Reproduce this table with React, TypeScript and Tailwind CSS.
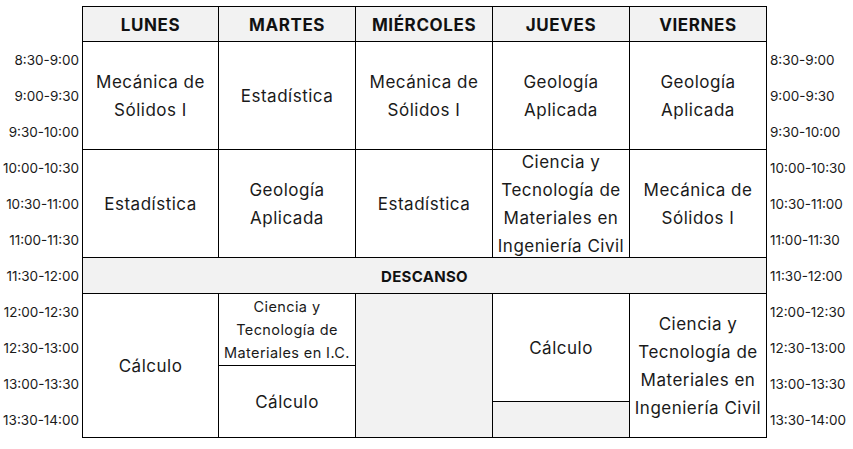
import React from "react";

const times = [
  "8:30-9:00",
  "9:00-9:30",
  "9:30-10:00",
  "10:00-10:30",
  "10:30-11:00",
  "11:00-11:30",
  "11:30-12:00",
  "12:00-12:30",
  "12:30-13:00",
  "13:00-13:30",
  "13:30-14:00",
];

const rowStart = [
  "row-start-2",
  "row-start-3",
  "row-start-4",
  "row-start-5",
  "row-start-6",
  "row-start-7",
  "row-start-8",
  "row-start-9",
  "row-start-10",
  "row-start-11",
  "row-start-12",
];

const base =
  "flex items-center justify-center text-center border-r border-b border-black text-[#1a1a1a]";
const cell = base + " text-[17px] leading-[28px] tracking-[0.5px]";
const small = base + " text-[14.5px] leading-[23px] tracking-[0.4px]";

const headerCols = ["col-start-2", "col-start-3", "col-start-4", "col-start-5", "col-start-6"];

export default function App() {
  return (
    <div
      className="w-[853px] h-[449px] bg-white pt-[6px]"
      style={{ fontFamily: "Inter, 'Noto Sans', sans-serif" }}
    >
      <div className="grid grid-cols-[82px_137px_137px_137px_137px_137px_1fr] grid-rows-[36px_repeat(11,36px)]">
        {/* header */}
        {["LUNES", "MARTES", "MIÉRCOLES", "JUEVES", "VIERNES"].map((d, i) => (
          <div
            key={d}
            className={`row-start-1 ${headerCols[i]} ${
              i === 0 ? "border-l" : ""
            } flex items-center justify-center pt-[3px] border-t border-r border-b border-black bg-[#f2f2f2] font-bold text-[17px] tracking-[0.6px] text-[#111]`}
          >
            {d}
          </div>
        ))}

        {/* time labels */}
        {times.map((t, i) => (
          <React.Fragment key={t}>
            <div
              className={`col-start-1 ${rowStart[i]} flex items-center justify-end pr-[3px] text-[13.5px] text-[#1a1a1a]`}
            >
              {t}
            </div>
            <div
              className={`col-start-7 ${rowStart[i]} flex items-center justify-start pl-[3px] text-[13.5px] text-[#1a1a1a]`}
            >
              {t}
            </div>
          </React.Fragment>
        ))}

        {/* LUNES */}
        <div className={`${cell} border-l col-start-2 row-start-2 row-span-3`}>
          Mecánica de
          <br />
          Sólidos I
        </div>
        <div className={`${cell} border-l col-start-2 row-start-5 row-span-3`}>
          Estadística
        </div>
        <div
          className={`${base} border-l col-start-2 col-span-5 row-start-8 pt-[3px] bg-[#f2f2f2] font-bold text-[15px] tracking-[0.3px] text-[#111]`}
        >
          DESCANSO
        </div>
        <div className={`${cell} border-l col-start-2 row-start-9 row-span-4`}>
          Cálculo
        </div>

        {/* MARTES */}
        <div className={`${cell} col-start-3 row-start-2 row-span-3`}>
          Estadística
        </div>
        <div className={`${cell} col-start-3 row-start-5 row-span-3`}>
          Geología
          <br />
          Aplicada
        </div>
        <div className={`${small} col-start-3 row-start-9 row-span-2`}>
          Ciencia y
          <br />
          Tecnología de
          <br />
          Materiales en I.C.
        </div>
        <div className={`${cell} col-start-3 row-start-11 row-span-2`}>
          Cálculo
        </div>

        {/* MIÉRCOLES */}
        <div className={`${cell} col-start-4 row-start-2 row-span-3`}>
          Mecánica de
          <br />
          Sólidos I
        </div>
        <div className={`${cell} col-start-4 row-start-5 row-span-3`}>
          Estadística
        </div>
        <div className={`${base} col-start-4 row-start-9 row-span-4 bg-[#f2f2f2]`}></div>

        {/* JUEVES */}
        <div className={`${cell} col-start-5 row-start-2 row-span-3`}>
          Geología
          <br />
          Aplicada
        </div>
        <div className={`${cell} col-start-5 row-start-5 row-span-3`}>
          Ciencia y
          <br />
          Tecnología de
          <br />
          Materiales en
          <br />
          Ingeniería Civil
        </div>
        <div className={`${cell} col-start-5 row-start-9 row-span-3`}>
          Cálculo
        </div>
        <div className={`${base} col-start-5 row-start-12 bg-[#f2f2f2]`}></div>

        {/* VIERNES */}
        <div className={`${cell} col-start-6 row-start-2 row-span-3`}>
          Geología
          <br />
          Aplicada
        </div>
        <div className={`${cell} col-start-6 row-start-5 row-span-3`}>
          Mecánica de
          <br />
          Sólidos I
        </div>
        <div className={`${cell} col-start-6 row-start-9 row-span-4`}>
          Ciencia y
          <br />
          Tecnología de
          <br />
          Materiales en
          <br />
          Ingeniería Civil
        </div>
      </div>
    </div>
  );
}
